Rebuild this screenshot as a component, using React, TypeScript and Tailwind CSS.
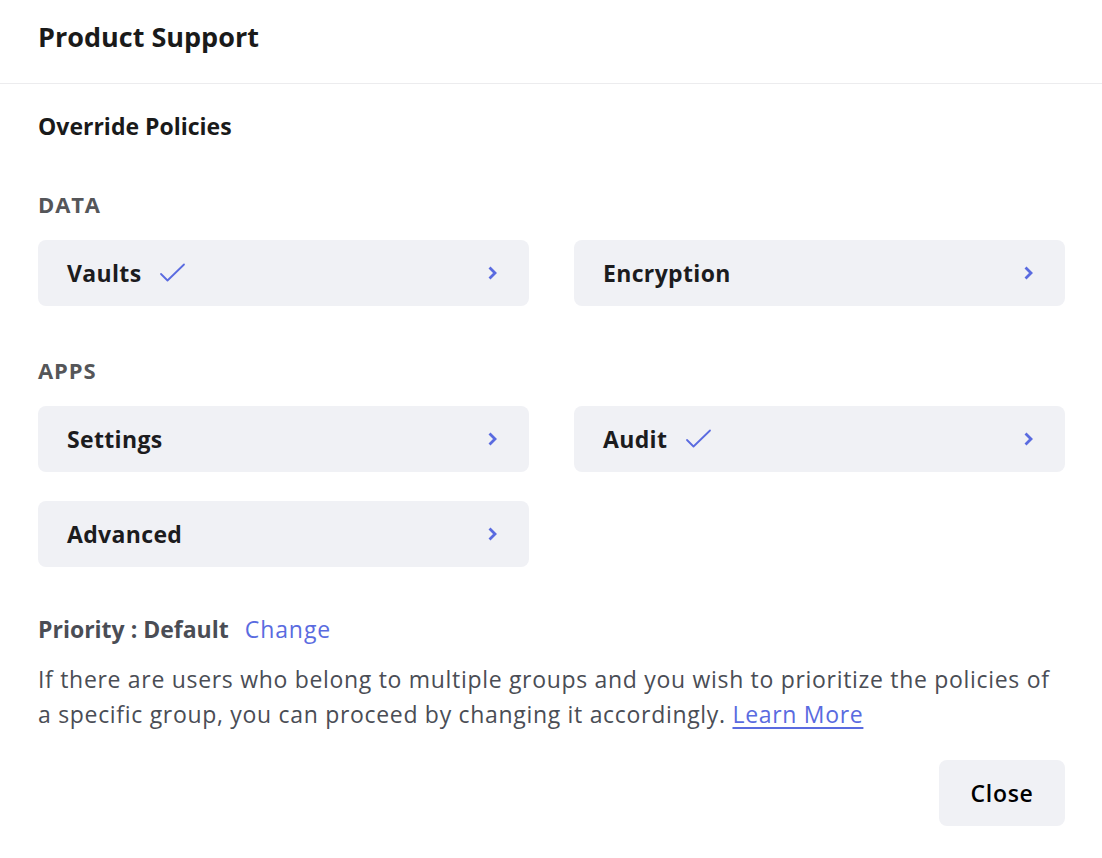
import React from 'react';

const font = { fontFamily: '"Open Sans", "Liberation Sans", sans-serif' };

const Check = () => (
  <svg width="28" height="20" viewBox="0 0 28 20" fill="none" className="ml-[18px]">
    <path d="M2 11 L8.5 17.5 L25 1.5" stroke="#5a6be0" strokeWidth="1.8" strokeLinecap="round" strokeLinejoin="round" />
  </svg>
);

const Chevron = () => (
  <svg width="12" height="14" viewBox="0 0 12 14" fill="none">
    <path d="M3.5 2.5 L8 7 L3.5 11.5" stroke="#5a6be0" strokeWidth="2.8" strokeLinecap="square" strokeLinejoin="miter" />
  </svg>
);

interface PolicyCardProps {
  label: string;
  checked?: boolean;
}

const PolicyCard = ({ label, checked }: PolicyCardProps) => (
  <button className="flex h-[66px] items-center justify-between rounded-lg bg-[#f0f1f5] pl-[29px] pr-[30px] text-left">
    <span className="flex items-center">
      <span className="text-[23px] font-bold tracking-[0.015em] text-[#1c1c1e]">{label}</span>
      {checked && <Check />}
    </span>
    <Chevron />
  </button>
);

export default function App() {
  return (
    <div className="min-h-screen w-full bg-white" style={font}>
      <div className="flex h-[84px] items-center border-b border-[#ececee] px-[38px] pb-2">
        <h1 className="text-[27px] font-bold text-[#1a1a1a]">Product Support</h1>
      </div>

      <div className="pl-[38px] pr-[37px]">
        <h2 className="mt-[25px] text-[23px] font-bold leading-[34px] text-[#1a1a1a]">Override Policies</h2>

        <div className="mt-[45px] text-[22px] font-bold leading-[32px] tracking-[0.04em] text-[#555659]">DATA</div>
        <div className="mt-[20px] grid grid-cols-2 gap-x-[45px]">
          <PolicyCard label="Vaults" checked />
          <PolicyCard label="Encryption" />
        </div>

        <div className="mt-[48px] text-[22px] font-bold leading-[32px] tracking-[0.04em] text-[#555659]">APPS</div>
        <div className="mt-[20px] grid grid-cols-2 gap-x-[45px] gap-y-[29px]">
          <PolicyCard label="Settings" />
          <PolicyCard label="Audit" checked />
          <PolicyCard label="Advanced" />
        </div>

        <div className="mt-[45px] flex items-center gap-4 leading-[34px]">
          <span className="text-[23px] font-bold text-[#4a4d55]">Priority : Default</span>
          <a className="cursor-pointer text-[23px] font-medium tracking-[0.04em] text-[#5a6be0]">Change</a>
        </div>

        <p className="mt-[16px] text-[23px] leading-[35px] tracking-[0.03em] text-[#4a4d55]">
          If there are users who belong to multiple groups and you wish to prioritize the policies of a specific group, you can proceed by changing it accordingly.{' '}
          <a className="cursor-pointer text-[#5a6be0] underline underline-offset-4">Learn More</a>
        </p>

        <div className="mt-[28px] flex justify-end">
          <button className="h-[66px] w-[126px] rounded-lg bg-[#f0f1f5] text-[23px] font-semibold tracking-[0.03em] text-black">Close</button>
        </div>
      </div>
    </div>
  );
}
